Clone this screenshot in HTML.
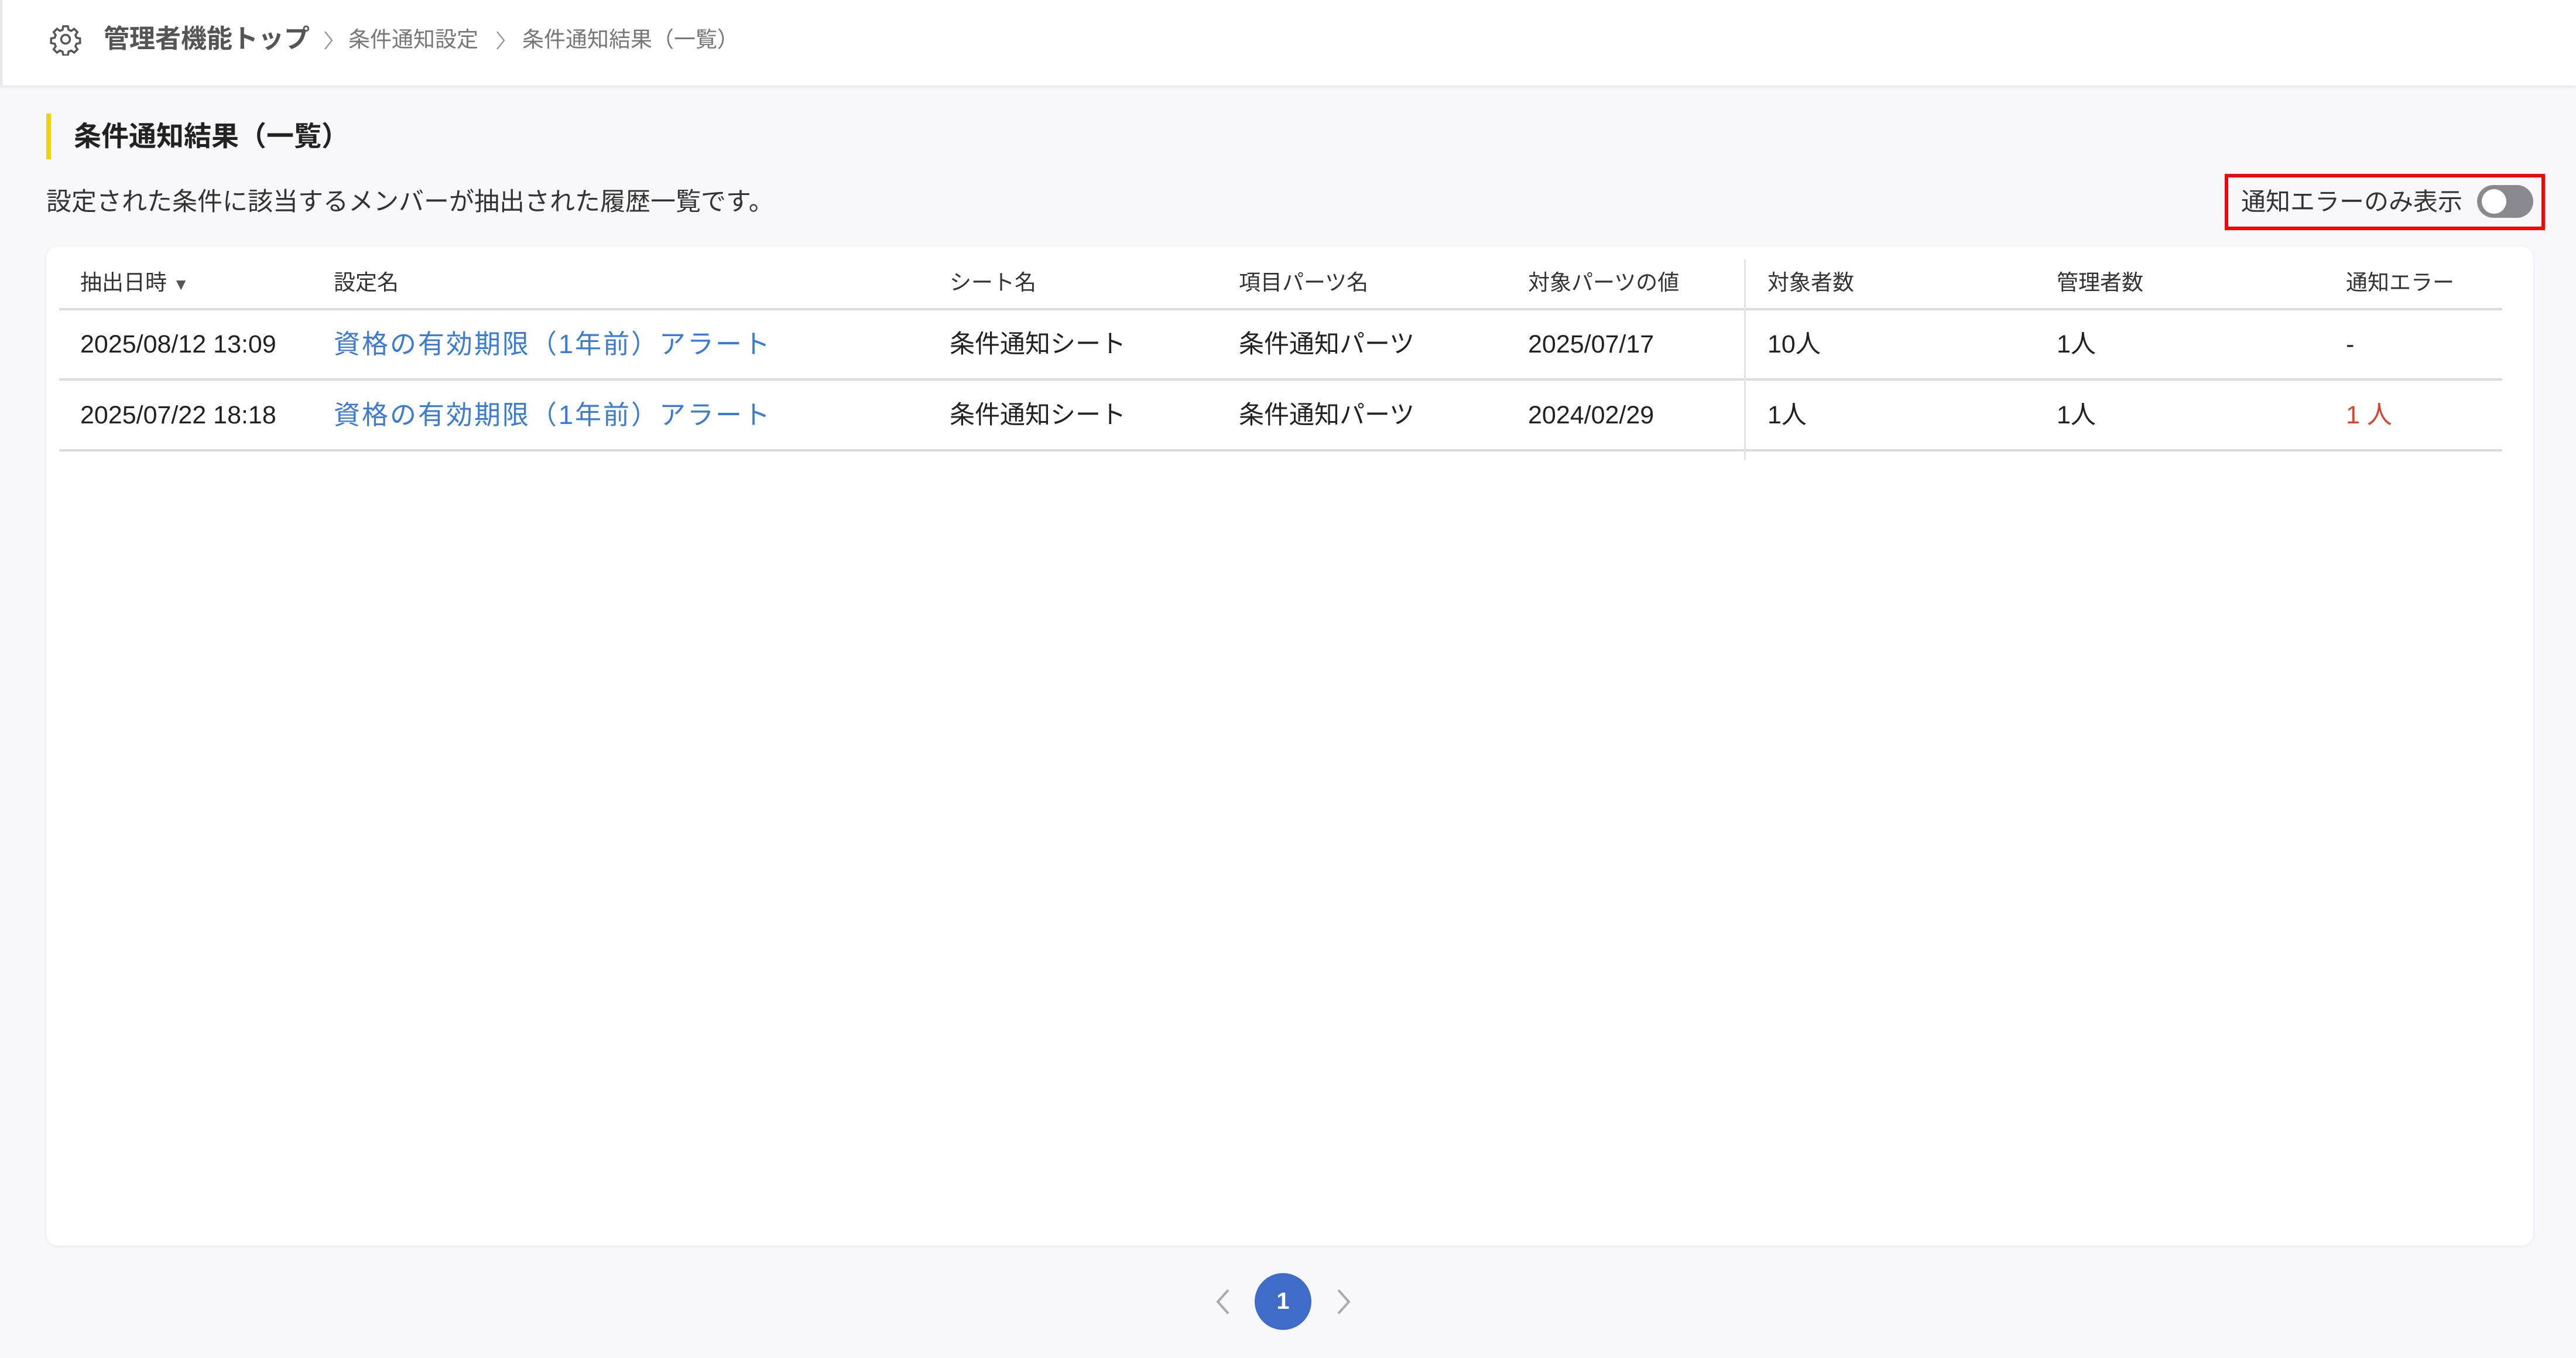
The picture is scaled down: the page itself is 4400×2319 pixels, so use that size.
<!DOCTYPE html>
<html><head><meta charset="utf-8"><style>
*{margin:0;padding:0;box-sizing:border-box}
body{width:4400px;height:2319px;background:#f8f8fa;font-family:"Liberation Sans","Noto Sans CJK JP",sans-serif;position:relative;overflow:hidden;color:#222}
.abs{position:absolute;white-space:nowrap}
.hdr{position:absolute;left:0;top:0;width:4400px;height:146px;background:#fff;box-shadow:0 3px 6px rgba(0,0,0,.08);border-left:4px solid #e8e8e8}
.card{position:absolute;left:79px;top:421px;width:4248px;height:1706px;background:#fff;border-radius:20px;box-shadow:0 1px 6px rgba(0,0,0,.08)}
.th{font-size:37px;color:#333;top:458px;line-height:50px}
.td{font-size:43px;color:#222;line-height:60px}
.lk{color:#3a7bd5;font-size:45px;letter-spacing:3px}
.line{position:absolute;left:101px;width:4173px;height:4px;background:#dcdcdc}
</style></head><body>
<div class="hdr"></div>
<svg class="abs" style="left:84px;top:39px" width="56" height="56" viewBox="0 0 24 24" fill="none" stroke="#555" stroke-width="1.5"><circle cx="12" cy="12" r="3.2"/><path d="M10.3 2.5h3.4l.5 2.6 1.9.8 2.2-1.5 2.4 2.4-1.5 2.2.8 1.9 2.6.5v3.4l-2.6.5-.8 1.9 1.5 2.2-2.4 2.4-2.2-1.5-1.9.8-.5 2.6h-3.4l-.5-2.6-1.9-.8-2.2 1.5-2.4-2.4 1.5-2.2-.8-1.9-2.6-.5v-3.4l2.6-.5.8-1.9-1.5-2.2 2.4-2.4 2.2 1.5 1.9-.8z"/></svg>
<div class="abs" style="left:177px;top:40px;font-size:44px;font-weight:bold;color:#555;line-height:54px">管理者機能トップ</div>
<svg class="abs" style="left:552px;top:52px" width="18" height="34" viewBox="0 0 18 34"><path d="M3 2l12 15L3 32" fill="none" stroke="#999" stroke-width="2.5"/></svg>
<div class="abs" style="left:595px;top:45px;font-size:37px;color:#777;line-height:46px">条件通知設定</div>
<svg class="abs" style="left:846px;top:52px" width="18" height="34" viewBox="0 0 18 34"><path d="M3 2l12 15L3 32" fill="none" stroke="#999" stroke-width="2.5"/></svg>
<div class="abs" style="left:892px;top:45px;font-size:37px;color:#777;line-height:46px">条件通知結果（一覧）</div>

<div class="abs" style="left:79px;top:194px;width:8px;height:78px;background:#f5d10a"></div>
<div class="abs" style="left:126px;top:205px;font-size:47px;font-weight:bold;color:#222;line-height:56px">条件通知結果（一覧）</div>
<div class="abs" style="left:79px;top:318px;font-size:43px;color:#333;line-height:54px">設定された条件に該当するメンバーが抽出された履歴一覧です。</div>

<div class="abs" style="left:3800px;top:297px;width:547px;height:96px;border:6px solid #f00"></div>
<div class="abs" style="left:3828px;top:318px;font-size:42px;color:#333;line-height:54px">通知エラーのみ表示</div>
<div class="abs" style="left:4231px;top:316px;width:96px;height:56px;border-radius:28px;background:#8a8a8e"></div>
<div class="abs" style="left:4239px;top:323px;width:42px;height:42px;border-radius:50%;background:#fff"></div>

<div class="card"></div>
<div class="abs th" style="left:137px">抽出日時 <span style="font-size:28px;color:#555">▼</span></div>
<div class="abs th" style="left:570px">設定名</div>
<div class="abs th" style="left:1622px">シート名</div>
<div class="abs th" style="left:2116px">項目パーツ名</div>
<div class="abs th" style="left:2610px">対象パーツの値</div>
<div class="abs th" style="left:3019px">対象者数</div>
<div class="abs th" style="left:3513px">管理者数</div>
<div class="abs th" style="left:4007px">通知エラー</div>
<div class="line" style="top:526px"></div>
<div class="line" style="top:646px"></div>
<div class="line" style="top:767px"></div>
<div class="abs" style="left:2979px;top:443px;width:3px;height:343px;background:#e4e4e4"></div>

<div class="abs td" style="left:137px;top:558px">2025/08/12 13:09</div>
<div class="abs td lk" style="left:570px;top:558px">資格の有効期限（1年前）アラート</div>
<div class="abs td" style="left:1622px;top:558px">条件通知シート</div>
<div class="abs td" style="left:2116px;top:558px">条件通知パーツ</div>
<div class="abs td" style="left:2610px;top:558px">2025/07/17</div>
<div class="abs td" style="left:3019px;top:558px">10人</div>
<div class="abs td" style="left:3513px;top:558px">1人</div>
<div class="abs td" style="left:4007px;top:558px">-</div>

<div class="abs td" style="left:137px;top:679px">2025/07/22 18:18</div>
<div class="abs td lk" style="left:570px;top:679px">資格の有効期限（1年前）アラート</div>
<div class="abs td" style="left:1622px;top:679px">条件通知シート</div>
<div class="abs td" style="left:2116px;top:679px">条件通知パーツ</div>
<div class="abs td" style="left:2610px;top:679px">2024/02/29</div>
<div class="abs td" style="left:3019px;top:679px">1人</div>
<div class="abs td" style="left:3513px;top:679px">1人</div>
<div class="abs td" style="left:4007px;top:679px;color:#d9442b">1 人</div>

<svg class="abs" style="left:2074px;top:2200px" width="30" height="46" viewBox="0 0 30 46"><path d="M24 3L6 23l18 20" fill="none" stroke="#aaa" stroke-width="4"/></svg>
<div class="abs" style="left:2143px;top:2174px;width:97px;height:97px;border-radius:50%;background:#3f6cc9;color:#fff;font-size:40px;font-weight:bold;text-align:center;line-height:97px">1</div>
<svg class="abs" style="left:2280px;top:2200px" width="30" height="46" viewBox="0 0 30 46"><path d="M6 3l18 20-18 20" fill="none" stroke="#aaa" stroke-width="4"/></svg>
</body></html>
